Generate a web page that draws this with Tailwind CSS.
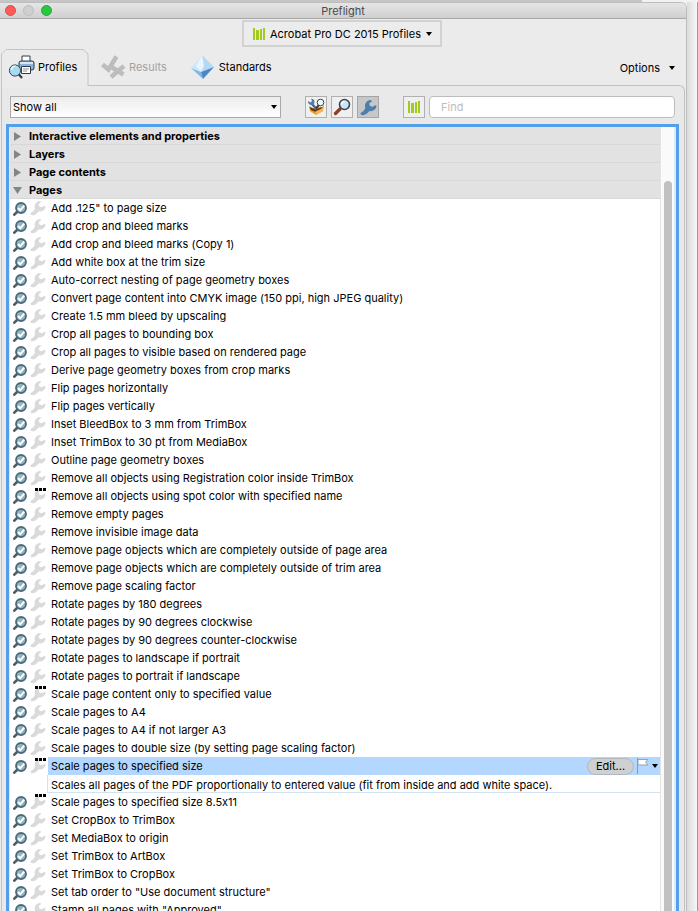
<!DOCTYPE html>
<html lang="en">
<head>
<meta charset="utf-8">
<title>Preflight</title>
<script src="https://cdn.jsdelivr.net/npm/@tailwindcss/browser@4"></script>
</head>
<body class="h-screen overflow-hidden bg-[#f2f2f2] font-['Inter','Liberation_Sans',sans-serif] text-[11px] leading-[18px] text-black [font-feature-settings:'calt'_0]">
<svg class="hidden">
  <symbol id="check" viewBox="0 0 14 14">
    <path d="M1.300 12.700L4 10" stroke="#46606e" stroke-width="2.600" stroke-linecap="round"/>
    <circle cx="8" cy="6" r="5" fill="#8fb4c4" stroke="#4d6876" stroke-width="1.800"/>
    <path d="M5 6l2.300 2.300 3.900-4.600" fill="none" stroke="#fff" stroke-width="2"/>
  </symbol>
  <symbol id="wrench" viewBox="0 0 16 16">
    <path d="M.5 13.200Q4 11.800 5 8.500C3.800 4.800 6 1.300 10.300 1L11.300 2 8.700 4 9.300 6.600 11.700 7.200 14.600 5.800 15.600 6.700C15 10.300 11.800 11.900 9 11.300 7.500 12.500 6 15 3 15.200 1.200 15.300.3 14.500.5 13.200z" fill="currentColor"/>
  </symbol>
  <symbol id="books" viewBox="0 0 12 12">
    <path d="M0 0h2v12H0zM3 2h3v10H3zM7 1h2v11H7zM10 0h2v12h-2z" fill="#a2cb20"/>
  </symbol>
  <symbol id="caret" viewBox="0 0 6 4"><path d="M0 0h6L3 4z" fill="currentColor"/></symbol>
</svg>

<div class="flex h-full flex-col">
 <div class="h-0.5 w-[92%] shrink-0 bg-[#c6c6c6]"></div>
 <div class="flex min-h-0 flex-1">
  <main class="flex min-w-0 flex-1 flex-col overflow-hidden rounded-tr-md border-t border-r border-[#bdbdbd] bg-[#ebebeb]">
    <header class="relative flex h-4 shrink-0 items-center justify-center border-b border-[#a9a9a9] bg-linear-to-b from-[#e6e6e6] to-[#cfcfcf] text-[#4a4a4a]">
      <div class="absolute left-[5px] flex gap-[7px]">
        <button aria-label="Close" class="size-[11px] rounded-full border border-[#df4b45] bg-[#fc5b57]"></button>
        <button aria-label="Minimize" class="size-[11px] rounded-full border border-[#bcbcbc] bg-[#d0cfd0]"></button>
        <button aria-label="Zoom" class="size-[11px] rounded-full border border-[#25ab35] bg-[#28c840]"></button>
      </div>
      <h1>Preflight</h1>
    </header>

    <div class="flex h-[30px] shrink-0 justify-center pt-px pr-0.5">
      <button class="flex h-[27px] w-[200px] items-center border-2 border-[#d2d2d2] bg-[#ececec] pr-2 pl-[9px]">
        <svg class="mr-[5px] size-3"><use href="#books"/></svg>
        <span class="whitespace-nowrap">Acrobat Pro DC 2015 Profiles</span>
        <svg class="ml-auto h-1 w-1.5"><use href="#caret"/></svg>
      </button>
    </div>

    <nav class="relative z-10 flex h-[37px] shrink-0 items-center">
      <button class="relative flex h-[37px] w-[89px] items-center pb-0.5 pl-2">
        <svg class="absolute inset-0 h-[42px] w-[89px]" viewBox="0 0 89 42" fill="none"><path d="M2 36h86v3H2z" fill="#ebebeb"/><path d="M1.500 42V5L6 .5h77L88 5v32" stroke="#c4c4c4"/></svg>
        <svg class="relative h-6 w-[27px]" viewBox="0 0 27 24">
          <path d="M14 1h8v6h-8z" fill="#fff" stroke="#343b45"/>
          <rect x="11" y="6" width="15" height="9" rx="2" fill="#8ab4e2" stroke="#343b45"/>
          <path d="M12 8h13" stroke="#d2e8fb" stroke-width="2"/>
          <path d="M13.500 11.500h9v7h-9z" fill="#fff" stroke="#343b45"/><path d="M15 14h6M15 16h4" stroke="#8c8c8c"/>
          <path d="M10.500 19l3.500 4" stroke="#343b45" stroke-width="2.200"/>
          <circle cx="7" cy="15.500" r="5.600" fill="#a7daf0" stroke="#39434d"/><path d="M3.500 15q0-3.500 4-4" stroke="#ebf9ff" stroke-width="1.500" fill="none"/>
        </svg>
        <span class="relative ml-[3px]">Profiles</span>
      </button>
      <button class="ml-3 flex items-center gap-1 pb-0.5 text-[#a2a2a2]" disabled>
        <svg class="h-6 w-6" viewBox="0 0 24 24" fill="none" stroke="#bdbdbd" stroke-width="4.500"><path d="M1.500 9.500l6 5L15.500 1.500M9.500 11.500l13 8M23 11L10 22"/></svg>
        <span>Results</span>
      </button>
      <button class="ml-6 flex items-center gap-[5px] pb-0.5">
        <svg class="h-6 w-[23px]" viewBox="0 0 23 24"><path d="M11 0L0 13l10 4z" fill="#cde6f8"/><path d="M11 0l12 12-13 5z" fill="#b5d9f4"/><path d="M11 0l2 11-3 6-5-6z" fill="#e8f5fd"/><path d="M0 13l10 4 2 7z" fill="#82b7e5"/><path d="M23 12l-13 5 2 7z" fill="#4a88c5"/></svg>
        <span>Standards</span>
      </button>
      <button class="mr-[11px] ml-auto flex items-center gap-[9px]">
        <span>Options</span>
        <svg class="h-1 w-1.5"><use href="#caret"/></svg>
      </button>
    </nav>

    <section class="-mt-px mr-px ml-px flex min-h-0 flex-1 flex-col rounded-tr-md border-t border-r border-l border-[#c2c2c2] bg-[#e9e9e9]">
      <form class="flex h-[38px] shrink-0 items-center pt-1 pr-[9px] pb-0 pl-2">
        <div class="relative w-[271px]">
          <select aria-label="Filter" class="h-[22px] w-full appearance-none border border-[#a9a9a9] bg-linear-to-b from-[#ececec] to-white pl-0.5"><option>Show all</option></select>
          <svg class="pointer-events-none absolute top-[9px] right-1 h-1 w-1.5"><use href="#caret"/></svg>
        </div>
        <div class="ml-6 flex gap-1">
          <button type="button" aria-label="Checks and fixups" class="grid size-[22px] place-items-center border border-[#b0b0b0] bg-[#f0f0f0]">
            <svg class="size-[18px]" viewBox="0 0 18 18"><path d="M2 8l4 2 9-1 2-2-1 6-7 4-6-4z" fill="#e7962e"/><path d="M2.500 9l6 2.500L15 9l-1 3-5 2-5-2z" fill="#5f3415"/><path d="M8.500 13.500L16 10v3l-7 4z" fill="#f6b653"/><path d="M9.500 11L5 6" stroke="#3f6f9f" stroke-width="2.500"/><path d="M1 3l2.500 1.500L5 3 4 .8C7.500.5 8.500 4 6.500 6.500 3.500 8 .5 6 1 3z" fill="#4c7fae"/><path d="M12 7l-3 3.500" stroke="#493737" stroke-width="2"/><circle cx="13.500" cy="4.500" r="3.300" fill="#eff8fc" stroke="#3f454b"/></svg>
          </button>
          <button type="button" aria-label="Checks" class="grid size-[22px] place-items-center border border-[#b0b0b0] bg-[#f0f0f0]">
            <svg class="size-[18px]" viewBox="0 0 18 18"><path d="M2.500 15.500L7 11" stroke="#8b3e2a" stroke-width="3.200" stroke-linecap="round"/><circle cx="11.500" cy="6.500" r="5" fill="#c8e5f5" stroke="#3e444b" stroke-width="1.600"/><path d="M8.500 6.500q0-3 3-3" fill="none" stroke="#fff" stroke-width="1.500"/></svg>
          </button>
          <button type="button" aria-label="Fixups" class="grid size-[22px] place-items-center border border-[#a5a5a5] bg-[#c7c7c7] text-[#4d7fac]">
            <svg class="size-[17px]"><use href="#wrench"/></svg>
          </button>
        </div>
        <button type="button" aria-label="Libraries" class="ml-6 grid size-[22px] place-items-center border border-[#b0b0b0] bg-[#f0f0f0]">
          <svg class="size-3"><use href="#books"/></svg>
        </button>
        <input type="text" aria-label="Find" placeholder="Find" class="ml-1 h-[22px] min-w-0 flex-1 rounded border border-[#bcbcbc] bg-white pl-[11px] placeholder:text-[#bdbdbd]">
      </form>

      <div class="mr-[5px] ml-1 flex min-h-0 flex-1 border-x-3 border-t-3 border-[#549fe9] bg-white">
        <div class="min-w-0 flex-1 overflow-hidden border-l border-[#d9ecf6]">
          <div id="groups"></div>
          <ul id="profiles"></ul>
        </div>
        <div class="flex w-4 shrink-0 border-r-2 border-l border-r-[#d9ecf6] border-l-[#e3e3e3] bg-[#fafafa] pt-[54px] pl-[3px]">
          <div class="w-2 rounded-t-full bg-[#c1c1c1]"></div>
        </div>
      </div>
    </section>
  </main>
  <div class="w-[11px] shrink-0 border-r border-[#9b9b9b] bg-linear-to-r from-[#dcdcdc] to-[#f6f6f6]"></div>
 </div>
</div>

<script>
const groups = ["Interactive elements and properties", "Layers", "Page contents", "Pages"];
document.getElementById("groups").innerHTML = groups.map((name) => `
  <button class="flex h-[18px] w-full items-center border-b border-[#d8d8d8] bg-[#e2e2e2] pt-px pl-[3px] text-left font-bold">
    <svg class="mr-[7px] size-[9px] text-[#858585]" viewBox="0 0 9 9"><path d="${name === "Pages" ? "M0 1h9L4.500 8z" : "M1 0v9l7-4.500z"}" fill="currentColor"/></svg>
    <span>${name}</span>
  </button>`).join("");

const profiles = [
  'Add .125" to page size', "Add crop and bleed marks", "Add crop and bleed marks (Copy 1)",
  "Add white box at the trim size", "Auto-correct nesting of page geometry boxes",
  "Convert page content into CMYK image (150 ppi, high JPEG quality)", "Create 1.5 mm bleed by upscaling",
  "Crop all pages to bounding box", "Crop all pages to visible based on rendered page",
  "Derive page geometry boxes from crop marks", "Flip pages horizontally", "Flip pages vertically",
  "Inset BleedBox to 3 mm from TrimBox", "Inset TrimBox to 30 pt from MediaBox", "Outline page geometry boxes",
  "Remove all objects using Registration color inside TrimBox",
  "*Remove all objects using spot color with specified name", "Remove empty pages", "Remove invisible image data",
  "Remove page objects which are completely outside of page area",
  "Remove page objects which are completely outside of trim area", "Remove page scaling factor",
  "Rotate pages by 180 degrees", "Rotate pages by 90 degrees clockwise",
  "Rotate pages by 90 degrees counter-clockwise", "Rotate pages to landscape if portrait",
  "Rotate pages to portrait if landscape", "*Scale page content only to specified value", "Scale pages to A4",
  "Scale pages to A4 if not larger A3", "Scale pages to double size (by setting page scaling factor)",
  "*Scale pages to specified size", "*Scale pages to specified size 8.5x11", "Set CropBox to TrimBox",
  "Set MediaBox to origin", "Set TrimBox to ArtBox", "Set TrimBox to CropBox",
  'Set tab order to "Use document structure"', 'Stamp all pages with "Approved"'
];
const selected = "Scale pages to specified size";
document.getElementById("profiles").innerHTML = profiles.map((entry) => {
  const name = entry.replace("*", "");
  const dots = entry[0] === "*"
    ? `<svg class="absolute top-0 right-0 h-[3px] w-[11px]" viewBox="0 0 11 3"><path d="M0 0h3v3H0zM4 0h3v3H4zM8 0h3v3H8z"/></svg>` : "";
  const label = name === selected
    ? `<div class="ml-0.5 flex h-[18px] min-w-0 flex-1 items-center bg-[#b3d7ff] pl-[3px]">
         <span>${name}</span>
         <button class="ml-auto h-[17px] w-[47px] rounded-full border border-[#adb7c2] bg-[#d0d0d0] leading-[15px]">Edit...</button>
         <button class="ml-[3px] flex h-4 items-center gap-[3px]" aria-label="Flag">
           <svg class="h-4 w-3" viewBox="0 0 12 16"><path d="M1 1.500h10L8.500 4l2.500 3H1z" fill="#fff" stroke="#9ba1a9"/><path d="M.5 0v16" stroke="#8f99a4"/></svg>
           <svg class="mr-0.5 h-1 w-1.5"><use href="#caret"/></svg>
         </button>
       </div>`
    : `<span class="ml-[5px] whitespace-nowrap">${name}</span>`;
  const note = name === selected
    ? `<p class="ml-[37px] h-[18px] border-b border-l border-[#cfe3f5] pt-px pl-[3px] leading-[18px] whitespace-nowrap">Scales all pages of the PDF proportionally to entered value (fit from inside and add white space).</p>` : "";
  return `<li><div class="flex h-[18px] items-center pl-[3px]">
      <svg class="mt-px size-[14px] shrink-0"><use href="#check"/></svg>
      <span class="relative ml-[3px] size-4 shrink-0 text-[#dadada]"><svg class="size-4"><use href="#wrench"/></svg><span class="text-black">${dots}</span></span>
      ${label}
    </div>${note}</li>`;
}).join("");
</script>
</body>
</html>
